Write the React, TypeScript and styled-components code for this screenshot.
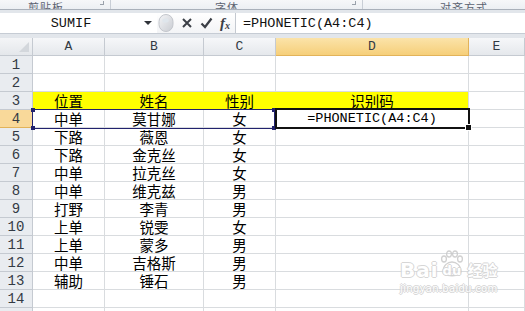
import styled, { createGlobalStyle } from "styled-components";

const GlobalStyle = createGlobalStyle`
  html, body {
    margin: 0;
    padding: 0;
    background: #ffffff;
    overflow: hidden;
  }
`;

const COLS = [
  { key: "A", width: 72 },
  { key: "B", width: 99 },
  { key: "C", width: 72 },
  { key: "D", width: 193 },
  { key: "E", width: 0 },
];

type Row = [string, string, string, string];

const ROWS: Row[] = [
  ["", "", "", ""],
  ["", "", "", ""],
  ["位置", "姓名", "性别", "识别码"],
  ["中单", "莫甘娜", "女", "=PHONETIC(A4:C4)"],
  ["下路", "薇恩", "女", ""],
  ["下路", "金克丝", "女", ""],
  ["中单", "拉克丝", "女", ""],
  ["中单", "维克兹", "男", ""],
  ["打野", "李青", "男", ""],
  ["上单", "锐雯", "女", ""],
  ["上单", "蒙多", "男", ""],
  ["中单", "吉格斯", "男", ""],
  ["辅助", "锤石", "男", ""],
  ["", "", "", ""],
  ["", "", "", ""],
];

const ACTIVE_ROW = 4;
const ACTIVE_COL = "D";
const YELLOW_ROW = 3;

const App = () => {
  return (
    <>
      <GlobalStyle />
      <Screen>
        <Ribbon>
          <RibbonGroup $width={111} $pad={28}>
            <RibbonLabel>剪贴板</RibbonLabel>
            <Launcher />
          </RibbonGroup>
          <RibbonGroup $width={252} $pad={104}>
            <RibbonLabel>字体</RibbonLabel>
            <Launcher />
          </RibbonGroup>
          <RibbonGroup $width={0} $pad={77}>
            <RibbonLabel>对齐方式</RibbonLabel>
          </RibbonGroup>
        </Ribbon>
        <Spacer $h={3} />
        <FormulaBar>
          <NameBox>
            <NameText>SUMIF</NameText>
            <DropArrow />
          </NameBox>
          <FormulaButtons>
            <svg width="16" height="18" viewBox="0 0 16 18">
              <defs>
                <linearGradient id="grip" x1="0" y1="0" x2="1" y2="1">
                  <stop offset="0" stopColor="#f4f5f7" />
                  <stop offset="1" stopColor="#c9ccd2" />
                </linearGradient>
              </defs>
              <rect x="1" y="0.5" width="14" height="17" rx="7" fill="url(#grip)" stroke="#c3c6cc" />
              <ellipse cx="7.5" cy="6.5" rx="3.2" ry="2" fill="#dfe6ec" />
            </svg>
            <svg width="12" height="12" viewBox="0 0 12 12">
              <path d="M2 2 L10 10 M10 2 L2 10" stroke="#3b3f46" strokeWidth="2" />
            </svg>
            <svg width="13" height="12" viewBox="0 0 13 12">
              <path d="M1.5 6.5 L5 10 L11.5 1.5" stroke="#3b3f46" strokeWidth="2.2" fill="none" />
            </svg>
            <Fx>
              f<sub>x</sub>
            </Fx>
          </FormulaButtons>
          <FormulaInput>=PHONETIC(A4:C4)</FormulaInput>
        </FormulaBar>
        <Spacer $h={4} />
        <SheetWrap>
          <Sheet>
            <Corner>
              <CornerTri />
            </Corner>
            {COLS.map((c) => (
              <ColHeader key={c.key} $active={c.key === ACTIVE_COL}>
                {c.key}
              </ColHeader>
            ))}
            {ROWS.map((row, i) => {
              const n = i + 1;
              const filled = n === YELLOW_ROW;
              return [
                <RowHeader key={`h${n}`} $active={n === ACTIVE_ROW}>
                  {n}
                </RowHeader>,
                ...row.map((text, j) => (
                  <Cell
                    key={`c${n}-${j}`}
                    $fill={filled ? "#ffff00" : undefined}
                    $join={filled && j < 3}
                    $mono={text.startsWith("=")}
                  >
                    {text}
                  </Cell>
                )),
                <Cell key={`e${n}`} />,
              ];
            })}
          </Sheet>
          <RangeMark>
            <Handle $x="left" $y="top" />
            <Handle $x="left" $y="bottom" />
            <Handle $x="right" $y="top" />
            <Handle $x="right" $y="bottom" />
          </RangeMark>
          <ActiveCell>
            <FillHandle />
          </ActiveCell>
          <Watermark>
            <LogoLine>
              <BaiText>Bai</BaiText>
              <PawBox>
                <svg width="26" height="28" viewBox="0 0 26 28">
                  <g fill="none" stroke="#c9c9c9" strokeWidth="1.3">
                    <ellipse cx="5" cy="9" rx="2.4" ry="3" />
                    <ellipse cx="10" cy="4" rx="2.4" ry="3" />
                    <ellipse cx="16" cy="4" rx="2.4" ry="3" />
                    <ellipse cx="21" cy="9" rx="2.4" ry="3" />
                    <path d="M4 22 C4 15 9 12 13 12 C17 12 22 15 22 22 C22 27 4 27 4 22 Z" />
                  </g>
                </svg>
                <DuText>du</DuText>
              </PawBox>
              <JingText>经验</JingText>
            </LogoLine>
            <UrlText>jingyan.baidu.com</UrlText>
          </Watermark>
        </SheetWrap>
      </Screen>
    </>
  );
};

export default App;

const Screen = styled.div`
  width: 525px;
  height: 311px;
  overflow: hidden;
  background: #e2e6eb;
  display: flex;
  flex-direction: column;
`;

const Ribbon = styled.div`
  height: 9px;
  display: flex;
  background: linear-gradient(#f6f7f9, #eceff3);
  border-bottom: 1px solid #a9b0ba;
  overflow: hidden;
  flex-shrink: 0;
`;

const RibbonGroup = styled.div<{ $width: number; $pad: number }>`
  position: relative;
  ${(p) => (p.$width ? `width: ${p.$width}px;` : "flex: 1;")}
  box-sizing: border-box;
  padding-left: ${(p) => p.$pad}px;
  border-right: 1px solid #c9ced6;
  display: flex;
  align-items: flex-end;
  &:last-child {
    border-right: none;
  }
`;

const RibbonLabel = styled.span`
  font-family: "Noto Sans CJK SC", sans-serif;
  font-size: 11px;
  line-height: 11px;
  color: #5a6170;
  margin-bottom: -4px;
  letter-spacing: 1px;
`;

const Launcher = styled.span`
  position: absolute;
  right: 6px;
  top: 1px;
  width: 3px;
  height: 3px;
  border-right: 1px solid #9aa1ab;
  border-bottom: 1px solid #9aa1ab;
`;

const Spacer = styled.div<{ $h: number }>`
  height: ${(p) => p.$h}px;
  flex-shrink: 0;
`;

const FormulaBar = styled.div`
  height: 20px;
  display: flex;
  background: #ffffff;
  border-bottom: 1px solid #c6ccd4;
  flex-shrink: 0;
`;

const NameBox = styled.div`
  width: 157px;
  display: flex;
  align-items: center;
  background: #ffffff;
`;

const NameText = styled.span`
  flex: 1;
  text-align: center;
  font-family: "Liberation Mono", monospace;
  font-size: 13.5px;
  color: #111;
  padding-right: 2px;
`;

const DropArrow = styled.span`
  width: 0;
  height: 0;
  margin-right: 5px;
  border-left: 4px solid transparent;
  border-right: 4px solid transparent;
  border-top: 4px solid #2f333a;
`;

const FormulaButtons = styled.div`
  width: 79px;
  display: flex;
  align-items: center;
  gap: 7px;
  padding-left: 1px;
  box-sizing: border-box;
  background: linear-gradient(#ffffff, #f3f4f6);
  border-right: 1px solid #c4c9d0;
`;

const Fx = styled.span`
  font-family: "Liberation Serif", serif;
  font-style: italic;
  font-weight: bold;
  font-size: 15px;
  color: #3b3f46;
  line-height: 1;
  sub {
    font-size: 10px;
    vertical-align: -1px;
  }
`;

const FormulaInput = styled.div`
  flex: 1;
  display: flex;
  align-items: center;
  padding-left: 7px;
  font-family: "Liberation Mono", monospace;
  font-size: 13.5px;
  color: #111;
`;

const SheetWrap = styled.div`
  position: relative;
  flex: 1;
  background: #ffffff;
`;

const Sheet = styled.div`
  display: grid;
  grid-template-columns: 33px ${COLS.slice(0, 4)
      .map((c) => `${c.width}px`)
      .join(" ")} 1fr;
  grid-auto-rows: 18px;
`;

const HeaderBase = styled.div`
  box-sizing: border-box;
  border-right: 1px solid #c5cad1;
  border-bottom: 1px solid #c5cad1;
  font-family: "Liberation Mono", monospace;
  font-size: 13px;
  color: #333a44;
  display: flex;
  align-items: center;
  justify-content: center;
`;

const Corner = styled(HeaderBase)`
  position: relative;
  background: linear-gradient(#f4f5f7, #e4e7eb);
`;

const CornerTri = styled.span`
  position: absolute;
  right: 3px;
  bottom: 3px;
  width: 0;
  height: 0;
  border-left: 10px solid transparent;
  border-bottom: 10px solid #d3d7dc;
`;

const ColHeader = styled(HeaderBase)<{ $active?: boolean }>`
  background: ${(p) =>
    p.$active
      ? "linear-gradient(#fbe3a9, #f6cf7a)"
      : "linear-gradient(#f6f7f9, #e5e8ec)"};
  border-right-color: ${(p) => (p.$active ? "#e2b35a" : "#c5cad1")};
  border-bottom-color: ${(p) => (p.$active ? "#e2b35a" : "#c5cad1")};
`;

const RowHeader = styled(HeaderBase)<{ $active?: boolean }>`
  background: ${(p) => (p.$active ? "#f9d99a" : "#e9ecf0")};
  border-bottom-color: ${(p) => (p.$active ? "#e2b35a" : "#c5cad1")};
  font-size: 14px;
  padding-top: 1px;
`;

const Cell = styled.div<{ $fill?: string; $join?: boolean; $mono?: boolean }>`
  box-sizing: border-box;
  border-right: 1px solid ${(p) => (p.$join ? p.$fill : "#d9dcdf")};
  border-bottom: 1px solid ${(p) => (p.$fill ? p.$fill : "#d9dcdf")};
  background: ${(p) => p.$fill || "transparent"};
  font-family: ${(p) =>
    p.$mono
      ? '"Liberation Mono", monospace'
      : '"Noto Sans CJK SC", "Noto Sans", sans-serif'};
  font-size: ${(p) => (p.$mono ? "13.5px" : "14.5px")};
  line-height: 18px;
  color: #000;
  text-align: center;
  white-space: nowrap;
  overflow: visible;
`;

const RangeMark = styled.div`
  position: absolute;
  left: 32px;
  top: 71px;
  width: 243px;
  height: 20px;
  box-sizing: border-box;
  border: 1px solid #22226e;
  pointer-events: none;
`;

const Handle = styled.span<{ $x: "left" | "right"; $y: "top" | "bottom" }>`
  position: absolute;
  ${(p) => p.$x}: -2px;
  ${(p) => p.$y}: -2px;
  width: 4px;
  height: 4px;
  background: #22226e;
`;

const ActiveCell = styled.div`
  position: absolute;
  left: 275px;
  top: 70px;
  width: 195px;
  height: 21px;
  box-sizing: border-box;
  border: 2px solid #111;
`;

const FillHandle = styled.span`
  position: absolute;
  right: -4px;
  bottom: -4px;
  width: 5px;
  height: 5px;
  background: #111;
  border: 1px solid #fff;
`;

const Watermark = styled.div`
  position: absolute;
  left: 400px;
  top: 212px;
  display: flex;
  flex-direction: column;
  align-items: center;
  opacity: 0.85;
  pointer-events: none;
`;

const LogoLine = styled.div`
  display: flex;
  align-items: flex-end;
`;

const outline = `
  color: #ffffff;
  text-shadow: 1px 0 0 #cfcfcf, -1px 0 0 #cfcfcf, 0 1px 0 #cfcfcf, 0 -1px 0 #cfcfcf;
`;

const BaiText = styled.span`
  ${outline}
  font-family: "DejaVu Sans", sans-serif;
  font-weight: bold;
  font-size: 20px;
  line-height: 20px;
  letter-spacing: 1px;
`;

const PawBox = styled.span`
  position: relative;
  display: flex;
  width: 26px;
  height: 30px;
  svg {
    position: absolute;
    left: 0;
    top: 0;
  }
`;

const DuText = styled.span`
  ${outline}
  position: absolute;
  left: 4px;
  bottom: 2px;
  font-family: "DejaVu Sans", sans-serif;
  font-weight: bold;
  font-size: 13px;
`;

const JingText = styled.span`
  ${outline}
  font-family: "Noto Sans CJK SC", sans-serif;
  font-weight: bold;
  font-size: 15px;
  line-height: 20px;
  margin-left: 3px;
`;

const UrlText = styled.span`
  ${outline}
  font-family: "DejaVu Sans", sans-serif;
  font-size: 10px;
  margin-top: 3px;
  letter-spacing: 0.3px;
`;
